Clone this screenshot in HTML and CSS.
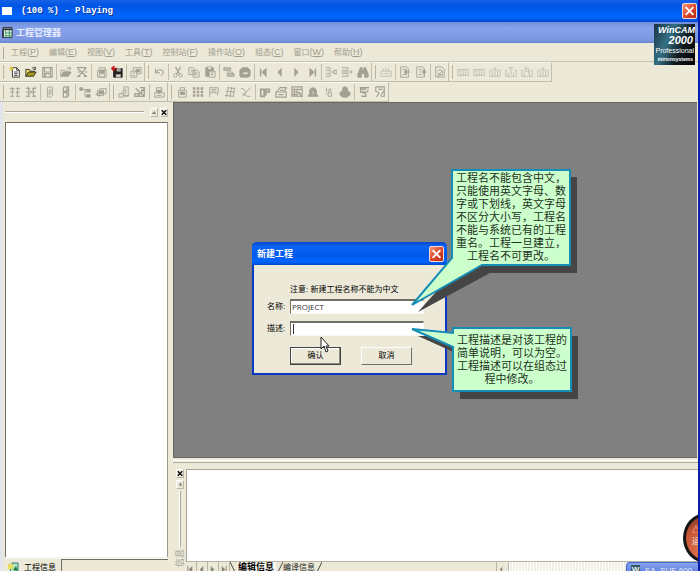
FILE: index.html
```html
<!DOCTYPE html>
<html lang="zh-CN">
<head>
<meta charset="utf-8">
<title>工程管理器</title>
<link rel="stylesheet" href="styles.css">
</head>
<body>
<svg class="symbols" aria-hidden="true">
  <symbol id="new" viewBox="0 0 14 14"><path d="M4 2h5l3 3v8H4z" fill="#fff" stroke="#222"/><path d="M9 2v3h3M6 7h4M6 9h4M6 11h4" stroke="#222"/><path d="M3 0v6M0 3h6M1 1l4 4M5 1L1 5" stroke="#d6c63a"/></symbol>
  <symbol id="open" viewBox="0 0 14 14"><path d="M1 12V4h4l1 2h5v2" fill="#f4e36c" stroke="#222"/><path d="M1 12l3-5h9l-3 5z" fill="#a89a1c" stroke="#222"/><path d="M8 3q2-3 4 0m0-2v3h-2" stroke="#222"/></symbol>
  <symbol id="open-off" viewBox="0 0 14 14"><path d="M1 12V5h4l1 1h4v2"/><path d="M1 12l3-5h9l-3 5z" class="fill"/><path d="M8 3q2-3 4 0m0-2v3h-2"/></symbol>
  <symbol id="save" viewBox="0 0 14 14"><path d="M2 2h11v11H2zM4 2v5h7V2M4 13V9h7v4M5 10v3" stroke-width="1.4"/></symbol>
  <symbol id="close" viewBox="0 0 14 14"><path d="M1 2h11M1 12h4m4 0h4M3 12L12 2M2 3l10 9M2 7h3m5 0h3" stroke-width="1.4"/></symbol>
  <symbol id="saveas" viewBox="0 0 14 14"><path d="M3 5h10v8H3zM5 9h6v4H5z"/><path d="M5 5h6v3H5z" class="fill"/><path d="M5 4V2h7v3"/></symbol>
  <symbol id="export" viewBox="0 0 14 14"><path d="M4 3h9v10H3V5z" fill="#222" stroke="#222"/><path d="M6 10h5v3H6z" fill="#ddd"/><path d="M7 3h4v3H7z" fill="#aaa"/><path d="M7 3H1m3-3L1 3l3 3" stroke="#c5161d" stroke-width="1.8"/></symbol>
  <symbol id="props" viewBox="0 0 14 14"><path d="M4 2h9v7H8M4 5V2M1 6h7v7H1zM3 8h3m-3 3h3"/><path d="M7 4h4v3H7z" class="fill"/></symbol>
  <symbol id="undo" viewBox="0 0 14 14"><path d="M3 3v5h5M3 8c2-5 9-5 9 0q0 2-3 3" stroke-width="1.2"/></symbol>
  <symbol id="cut" viewBox="0 0 14 14"><path d="M4 1l5 9M10 1L5 10" stroke-width="1.4"/><circle cx="4" cy="11" r="2"/><circle cx="10" cy="11" r="2"/></symbol>
  <symbol id="copy" viewBox="0 0 14 14"><path d="M1 2h5l2 2v6H1zM6 5h5l2 2v6H6zM3 5h3m-3 2h3m2 1h3m-3 2h3"/></symbol>
  <symbol id="paste" viewBox="0 0 14 14"><path d="M2 2h9v10H2z" class="fill"/><path d="M4 1h5v3H4z" fill="#ece9d8"/><path d="M6 6h7v7H6zM8 8h3m-3 2h3" fill="#ece9d8"/></symbol>
  <symbol id="cascade" viewBox="0 0 14 14"><path d="M1 2h8v3H1zM5 9h8v3H5z" class="fill light"/><path d="M4 7h7v2"/></symbol>
  <symbol id="tray" viewBox="0 0 14 14"><path d="M1 5l3-3h6l3 3v6l-2 2H2l-1-2z" class="fill"/><path d="M5 7h6l-1 3H4z" fill="#ece9d8"/></symbol>
  <symbol id="first" viewBox="0 0 14 14"><path d="M3 3v9" stroke-width="1.8"/><path d="M10 2v11L4 7z" class="fill flat"/></symbol>
  <symbol id="prev" viewBox="0 0 14 14"><path d="M9 2v11L4 7z" class="fill flat"/></symbol>
  <symbol id="next" viewBox="0 0 14 14"><path d="M5 2v11l5-6z" class="fill flat"/></symbol>
  <symbol id="last" viewBox="0 0 14 14"><path d="M11 3v9" stroke-width="1.8"/><path d="M4 2v11l6-6z" class="fill flat"/></symbol>
  <symbol id="insert" viewBox="0 0 14 14"><path d="M1 2h5v3H1M1 12h5V9H1M5 7h4M10 5h4M10 5v4h4M13 5v4"/></symbol>
  <symbol id="remove" viewBox="0 0 14 14"><path d="M1 2h7v3H1M1 12h7V9H1M1 7h12m-2-2l2 2-2 2"/></symbol>
  <symbol id="find" viewBox="0 0 14 14"><path d="M4 2h2v3h2V2h2l3 7v4H9V9H5v4H1V9z" class="fill"/></symbol>
  <symbol id="ruler" viewBox="0 0 14 14"><path d="M1 6h12v6H1zM4 6V3m3 3V2m3 4V3M3 9h8" class="pale"/></symbol>
  <symbol id="pagein" viewBox="0 0 14 14"><path d="M2 1h7l2 2v10H2zM4 4h4M4 10h4"/><path d="M13 7H7m2-3L6 7l3 3z" class="fill"/></symbol>
  <symbol id="pageout" viewBox="0 0 14 14"><path d="M2 1h7l2 2v10H2zM4 4h4M4 10h4"/><path d="M5 7h6m-1-3l3 3-3 3z" class="fill"/></symbol>
  <symbol id="pagecheck" viewBox="0 0 14 14"><path d="M2 1h7l3 3v9H2zM4 6l3-2 3 2v4l-6 2 5-6M4 8l6 3"/></symbol>
  <symbol id="module" viewBox="0 0 14 14"><path d="M1 4h12v7H1zM4 4v7m3-7v7m3-7v7" class="pale"/></symbol>
  <symbol id="modup" viewBox="0 0 14 14"><path d="M3 5H1v7h12V5h-2M4 12V6l3-4 3 4v6M7 2v10" class="pale"/></symbol>
  <symbol id="modtop" viewBox="0 0 14 14"><path d="M3 5H1v7h12V5h-2M4 12V8m6 4V8M4 2h6M7 2v8" class="pale"/></symbol>
  <symbol id="modturn" viewBox="0 0 14 14"><path d="M3 5H1v7h12V5h-2M4 12V8m6 4V8M5 1v5h5M5 3h4v6" class="pale"/></symbol>
  <symbol id="grid" viewBox="0 0 14 14"><path d="M1 3h5m2 0h5M1 7h5m2 0h5M1 12h5m2 0h5M4 1v12M10 1v12M6 3L4 5m6 2l-2 2" /></symbol>
  <symbol id="gridx" viewBox="0 0 14 14"><path d="M1 3h5m2 0h5M1 7h12M1 12h5m2 0h5M4 1v12M10 1v12M2 1l11 12M13 1L2 13"/></symbol>
  <symbol id="clip" viewBox="0 0 14 14"><path d="M4 3q0-2 2-2h2q2 0 2 2v8l-2 2H4zM6 4v7m2-8v7" /></symbol>
  <symbol id="clipx" viewBox="0 0 14 14"><path d="M4 3q0-2 2-2h4v10l-2 2H4zM3 4l6 6m1-6l-6 4m4-6v9" stroke-width="1.4"/></symbol>
  <symbol id="tree" viewBox="0 0 14 14"><path d="M1 2h3v3H1zM9 4h4v3H9zM9 10h4v3H9z" class="fill"/><path d="M4 4h5M7 4v8h2"/></symbol>
  <symbol id="stack" viewBox="0 0 14 14"><path d="M5 3h8v6H8M3 5h7v6H3zM1 10l4-3v5z"/><path d="M5 6h5v3H5z" class="fill"/></symbol>
  <symbol id="tower" viewBox="0 0 14 14"><path d="M7 1h5v11H7zM1 9h5v4H1zM3 9l4-4M9 3v6M6 11h7"/></symbol>
  <symbol id="towerx" viewBox="0 0 14 14"><path d="M7 2h5v10H7M1 9h5v3H1zM3 13L13 2M2 3l10 9M9 4v6" stroke-width="1.5"/></symbol>
  <symbol id="download" viewBox="0 0 14 14"><path d="M2 8h11v5H2zM4 2h6v5H4z"/><path d="M4 5h6L7 9zM4 11h6" class="fill"/></symbol>
  <symbol id="lock" viewBox="0 0 14 14"><path d="M3 5h9v8H3zM5 5V2h5v3"/><path d="M5 7h5v3H5z" class="fill"/></symbol>
  <symbol id="dots" viewBox="0 0 14 14"><path d="M1 3h12M1 7h12M1 11h12" stroke-width="3" stroke-dasharray="3 1.5"/></symbol>
  <symbol id="flag" viewBox="0 0 14 14"><path d="M2 1v12M2 2h10v6H2M4 4h6M4 6h5m2 3v2"/></symbol>
  <symbol id="mesh" viewBox="0 0 14 14"><path d="M4 2l9 1M2 6l10 1M1 11l10 1M5 1L3 13M9 1L7 13M12 2l-1 11"/></symbol>
  <symbol id="curve" viewBox="0 0 14 14"><path d="M1 3q6 0 5 5t6 4M12 2L3 12M2 8l3 3"/></symbol>
  <symbol id="pipes" viewBox="0 0 14 14"><path d="M2 12V4h4v8zM8 11V4h4v3H9" stroke-width="2"/></symbol>
  <symbol id="printer" viewBox="0 0 14 14"><path d="M1 7h12v6H1zM2 7l4-5h7l-2 5M4 10h6M6 5h4" stroke-width="1.4"/></symbol>
  <symbol id="table" viewBox="0 0 14 14"><path d="M1 1h12v11H1zM1 4h12M4 4v8M7 4v8M1 7h8M1 10h7" stroke-width="1.3"/><path d="M9 7l4 6" stroke-width="2"/></symbol>
  <symbol id="bell" viewBox="0 0 14 14"><path d="M1 12l2-3V5q1-3 4-3t4 3v4l2 3z" class="fill"/><path d="M6 6l2 2-2 2" stroke="#ece9d8"/></symbol>
  <symbol id="link" viewBox="0 0 14 14"><path d="M4 2v4h3V3M6 8h4v4H6zM3 8l2 2m4-7v4"/></symbol>
  <symbol id="club" viewBox="0 0 14 14"><circle cx="7" cy="4" r="3" class="fill"/><circle cx="4" cy="9" r="3" class="fill"/><circle cx="10" cy="9" r="3" class="fill"/><path d="M4 13h6L7 8z" class="fill"/></symbol>
  <symbol id="script" viewBox="0 0 14 14"><path d="M2 2h11M3 2v5h6M4 4h5M5 8h4v4H4m6-5l2-2" stroke-width="1.6"/></symbol>
  <symbol id="note" viewBox="0 0 14 14"><path d="M2 1h10v11H8M2 1v5l4 2-3 5M5 4h5M8 11l4-6" stroke-width="1.3"/></symbol>
</svg>

<header class="title-bar">
  <span class="player-icon"></span>
  <span class="player-title">(100 %) - Playing</span>
  <button class="close-btn" aria-label="关闭"><svg viewBox="0 0 10 10"><path d="M2 2l6 6M8 2L2 8"/></svg></button>
</header>

<div class="app">
  <div class="app-title">
    <svg class="app-icon" viewBox="0 0 12 13"><path d="M1 1h10v11H1z" fill="#e4efe4" stroke="#26343c"/><path d="M1 3h10" stroke="#26343c" stroke-width="2"/><path d="M4 4v8M4 7h7M4 10h7M8 4v8" stroke="#39915a"/><path d="M1 4v8" stroke="#26343c" stroke-width="2"/></svg>
    <h1>工程管理器</h1>
  </div>

  <nav class="menu-bar">
    <a href="#">工程<span>(<u>P</u>)</span></a>
    <a href="#">编辑<span>(<u>E</u>)</span></a>
    <a href="#">视图<span>(<u>V</u>)</span></a>
    <a href="#">工具<span>(<u>T</u>)</span></a>
    <a href="#">控制站<span>(<u>F</u>)</span></a>
    <a href="#">操作站<span>(<u>O</u>)</span></a>
    <a href="#">组态<span>(<u>C</u>)</span></a>
    <a href="#">窗口<span>(<u>W</u>)</span></a>
    <a href="#">帮助<span>(<u>H</u>)</span></a>
  </nav>

  <div class="toolbar">
    <div class="group">
      <button aria-label="新建"><svg><use href="#new"/></svg></button>
      <button aria-label="打开"><svg><use href="#open"/></svg></button>
      <button aria-label="保存"><svg><use href="#save"/></svg></button>
      <i></i>
      <button aria-label="载入"><svg><use href="#open-off"/></svg></button>
      <button aria-label="关闭工程"><svg><use href="#close"/></svg></button>
      <i></i>
      <button aria-label="另存"><svg><use href="#saveas"/></svg></button>
      <button aria-label="导出"><svg><use href="#export"/></svg></button>
      <i></i>
      <button aria-label="属性"><svg><use href="#props"/></svg></button>
    </div>
    <div class="group">
      <button aria-label="撤消"><svg><use href="#undo"/></svg></button>
      <i></i>
      <button aria-label="剪切"><svg><use href="#cut"/></svg></button>
      <button aria-label="复制"><svg><use href="#copy"/></svg></button>
      <button aria-label="粘贴"><svg><use href="#paste"/></svg></button>
      <i></i>
      <button aria-label="层叠"><svg><use href="#cascade"/></svg></button>
      <button aria-label="收集"><svg><use href="#tray"/></svg></button>
      <i></i>
      <button aria-label="首项"><svg><use href="#first"/></svg></button>
      <button aria-label="上一项"><svg><use href="#prev"/></svg></button>
      <button aria-label="下一项"><svg><use href="#next"/></svg></button>
      <button aria-label="末项"><svg><use href="#last"/></svg></button>
      <i></i>
      <button aria-label="插入"><svg><use href="#insert"/></svg></button>
      <button aria-label="删除"><svg><use href="#remove"/></svg></button>
      <button aria-label="查找"><svg><use href="#find"/></svg></button>
    </div>
    <div class="group">
      <button aria-label="标尺"><svg><use href="#ruler"/></svg></button>
      <i></i>
      <button aria-label="导入页"><svg><use href="#pagein"/></svg></button>
      <button aria-label="导出页"><svg><use href="#pageout"/></svg></button>
      <i></i>
      <button aria-label="检查"><svg><use href="#pagecheck"/></svg></button>
    </div>
    <div class="group">
      <button aria-label="模块一"><svg><use href="#module"/></svg></button>
      <button aria-label="模块二"><svg><use href="#module"/></svg></button>
      <button aria-label="模块三"><svg><use href="#modup"/></svg></button>
      <button aria-label="模块四"><svg><use href="#modtop"/></svg></button>
      <button aria-label="模块五"><svg><use href="#modturn"/></svg></button>
      <button aria-label="模块六"><svg><use href="#modup"/></svg></button>
    </div>
  </div>

  <div class="toolbar">
    <div class="group">
      <button aria-label="网格"><svg><use href="#grid"/></svg></button>
      <button aria-label="清除网格"><svg><use href="#gridx"/></svg></button>
      <i></i>
      <button aria-label="附件"><svg><use href="#clip"/></svg></button>
      <button aria-label="移除附件"><svg><use href="#clipx"/></svg></button>
      <i></i>
      <button aria-label="结构"><svg><use href="#tree"/></svg></button>
      <button aria-label="堆叠"><svg><use href="#stack"/></svg></button>
    </div>
    <div class="group">
      <button aria-label="站点"><svg><use href="#tower"/></svg></button>
      <button aria-label="移除站点"><svg><use href="#towerx"/></svg></button>
      <i></i>
      <button aria-label="下载"><svg><use href="#download"/></svg></button>
    </div>
    <div class="group">
      <button aria-label="权限"><svg><use href="#lock"/></svg></button>
      <button aria-label="总貌"><svg><use href="#dots"/></svg></button>
      <button aria-label="标记"><svg><use href="#flag"/></svg></button>
      <button aria-label="分组"><svg><use href="#mesh"/></svg></button>
      <button aria-label="趋势"><svg><use href="#curve"/></svg></button>
      <i></i>
      <button aria-label="流程"><svg><use href="#pipes"/></svg></button>
      <button aria-label="打印"><svg><use href="#printer"/></svg></button>
      <button aria-label="报表"><svg><use href="#table"/></svg></button>
      <button aria-label="报警"><svg><use href="#bell"/></svg></button>
      <button aria-label="连接"><svg><use href="#link"/></svg></button>
      <button aria-label="用户"><svg><use href="#club"/></svg></button>
      <i></i>
      <button aria-label="脚本"><svg><use href="#script"/></svg></button>
      <button aria-label="注释"><svg><use href="#note"/></svg></button>
    </div>
  </div>

  <div class="main">
    <aside class="project-pane">
      <div class="pane-head">
        <span class="rule"></span>
        <button class="mini" aria-label="折叠"><svg viewBox="0 0 8 8"><path d="M1 6h6L4 2z" fill="#8a887c"/></svg></button>
        <button class="mini" aria-label="关闭"><svg viewBox="0 0 8 8"><path d="M1 1l6 6M7 1L1 7" stroke="#111" stroke-width="2"/></svg></button>
      </div>
      <div class="tree-view"></div>
      <div class="pane-tabs">
        <a class="pane-tab" href="#"><svg viewBox="0 0 11 11"><path d="M4 1h6v9H2z" fill="#b7e4c4" stroke="#2b7f80"/><path d="M0 2h5v5H0z" fill="#e8dd59"/><path d="M5 8l3-4 2 5z" fill="#277c45"/></svg>工程信息</a>
        <span class="tab-rest"></span>
      </div>
    </aside>

    <div class="right-column">
      <main class="workspace">
        <section class="dialog" role="dialog" aria-labelledby="dialog-title">
          <header>
            <h2 id="dialog-title">新建工程</h2>
            <button class="close-btn" aria-label="关闭"><svg viewBox="0 0 10 10"><path d="M2 2l6 6M8 2L2 8"/></svg></button>
          </header>
          <form>
            <p class="note">注意: 新建工程名称不能为中文</p>
            <label for="name">名称:</label>
            <input id="name" type="text" value="PROJECT">
            <label for="desc">描述:</label>
            <div class="caret-field"><input id="desc" type="text"></div>
            <div class="actions">
              <button class="default" type="button">确认</button>
              <button type="button">取消</button>
            </div>
          </form>
        </section>
        <svg class="balloons" viewBox="0 0 180 240" aria-hidden="true">
          <g fill="#454545"><path d="M50 8H167V104H80L8 143L50 96z"/><path d="M50 167H168V230H50V186L8 167z"/></g>
          <g fill="#ccffcc" stroke="#168db5" stroke-width="2"><path d="M42 1H160V96H72L2 136L42 89z"/><path d="M43 159H161V222H43V178L2 160L43 164z"/></g>
        </svg>
        <p class="tip tip-name">工程名不能包含中文，只能使用英文字母、数字或下划线，英文字母不区分大小写，工程名不能与系统已有的工程重名。工程一旦建立，工程名不可更改。</p>
        <p class="tip tip-desc">工程描述是对该工程的简单说明，可以为空。工程描述可以在组态过程中修改。</p>
        <svg class="pointer" viewBox="0 0 10 17" aria-hidden="true"><path d="M1 1v12l3-3 2 6 2-1-2-5h3z" fill="#fff" stroke="#222"/></svg>
      </main>

      <section class="output">
        <div class="output-side">
          <button class="mini" aria-label="关闭"><svg viewBox="0 0 8 8"><path d="M1 1l6 6M7 1L1 7" stroke="#111" stroke-width="2"/></svg></button>
          <button class="mini" aria-label="折叠"><svg viewBox="0 0 8 8"><path d="M6 1v6L2 4z" fill="#8a887c"/></svg></button>
          <span class="rule-v"></span>
          <span class="side-title">信息</span>
        </div>
        <div class="output-body">
          <div class="output-text"></div>
          <div class="sheet-bar">
            <button aria-label="首页"><svg viewBox="0 0 10 10"><path d="M2 1v8" stroke="#8a887c"/><path d="M7 1v8L3 5z" fill="#8a887c"/></svg></button>
            <button aria-label="上页"><svg viewBox="0 0 10 10"><path d="M7 1v8L3 5z" fill="#8a887c"/></svg></button>
            <button aria-label="下页"><svg viewBox="0 0 10 10"><path d="M3 1v8l4-4z" fill="#8a887c"/></svg></button>
            <button aria-label="末页"><svg viewBox="0 0 10 10"><path d="M8 1v8" stroke="#8a887c"/><path d="M3 1v8l4-4z" fill="#8a887c"/></svg></button>
            <svg class="slant" viewBox="0 0 7 12"><path d="M0 0l6 12"/></svg>
            <a class="sheet active" href="#">编辑信息</a>
            <svg class="slant" viewBox="0 0 7 12"><path d="M7 0L1 12"/></svg>
            <a class="sheet" href="#">编译信息</a>
            <svg class="slant" viewBox="0 0 7 12"><path d="M7 0L1 12"/></svg>
            <span class="sheet-fill"></span>
            <button class="scroll-left" aria-label="向左"><svg viewBox="0 0 10 10"><path d="M6 2v6L3 5z" fill="#8a887c"/></svg></button>
            <span class="scroll-track"></span>
          </div>
        </div>
      </section>
    </div>
  </div>
</div>

<div class="wincam"><b>WinCAM</b><strong>2000</strong><span>Professional</span><small>mirionsystems</small></div>
<div class="orb"><span>△<br>运行</span></div>
<div class="task-tip"><b>W</b><span>EA_SUE 600</span></div>
</body>
</html>
```
FILE: styles.css
```css
:root {
  --face: #ece9d8;
  --shade: #aca899;
  --dark: #716f64;
  --glyph: #a3a093;
}

* { box-sizing: border-box; }

body {
  margin: 0;
  height: 100vh;
  overflow: hidden;
  position: relative;
  display: flex;
  flex-direction: column;
  background: var(--face);
  border-right: 2px solid #0a1fa8;
  font: 8px/12px "Liberation Sans", "Noto Sans CJK SC", sans-serif;
  color: #222;
}

h1, h2, p { margin: 0; }
a { color: inherit; text-decoration: none; }
button { margin: 0; padding: 0; border: 0; background: none; font: inherit; color: inherit; }
svg { display: block; fill: none; }
.symbols { position: absolute; width: 0; height: 0; }

/* Title bars */
.title-bar {
  flex: none;
  height: 22px;
  display: flex;
  align-items: center;
  padding: 0 1px 0 2px;
  background: linear-gradient(#1763e8, #0055e5 25%, #0066ff 80%, #0046c8);
  color: #fff;
}
.player-icon { width: 10px; height: 8px; background: #fff; }
.player-title {
  flex: 1;
  margin-left: 9px;
  font: bold 9px/12px "Liberation Mono", monospace;
  text-shadow: 1px 1px #123c9c;
}
.close-btn {
  width: 15px;
  height: 16px;
  border: 1px solid #f5d9d0;
  border-radius: 2px;
  background: linear-gradient(135deg, #f09a7c, #e0492a 50%, #b8290c);
}
.close-btn svg { width: 100%; height: 100%; stroke: #fff; stroke-width: 1.5; }

.app {
  flex: 1;
  min-height: 0;
  display: flex;
  flex-direction: column;
}
.app-title {
  flex: none;
  height: 21px;
  display: flex;
  align-items: center;
  padding: 0 2px;
  background: linear-gradient(#6f8ddd, #88a2ea 30%, #7b97e0 85%, #6a85cf);
  color: #e6edff;
}
.app-icon { width: 11px; height: 13px; }
.app-title h1 {
  margin-left: 3px;
  font: bold 9px/12px "Noto Sans CJK SC", sans-serif;
}

/* Menu and toolbars */
.menu-bar {
  flex: none;
  height: 19px;
  display: flex;
  align-items: center;
  gap: 10px;
  padding-left: 11px;
  border-bottom: 1px solid #c8c4b2;
  color: #a09c8e;
  background: linear-gradient(var(--shade), var(--shade)) 3px 4px / 1px 12px no-repeat;
}
.menu-bar span { font-size: 9px; }

.toolbar {
  flex: none;
  height: 20px;
  display: flex;
}
.group {
  display: flex;
  align-items: center;
  padding-left: 7px;
  border-right: 1px solid #c2beae;
  border-bottom: 1px solid #c2beae;
  border-top: 1px solid #f8f7f0;
  background: linear-gradient(#b8b4a4, #b8b4a4) 3px 2px / 1px 14px no-repeat;
}
.group + .group { padding-left: 6px; }
.group button { width: 16px; height: 18px; display: grid; place-items: center; }
.group svg { width: 12px; height: 12px; stroke: var(--glyph); overflow: visible; }
.group i {
  width: 3px;
  height: 16px;
  background: linear-gradient(#c2beae, #c2beae) 1px 0 / 1px 100% no-repeat;
}
.fill { fill: var(--glyph); }
.light { fill: #c2bfb1; }
.flat { stroke: none; }
.pale { stroke: #bfbcae; }

/* Panels */
.main {
  flex: 1;
  min-height: 0;
  display: flex;
  border-left: 3px solid #e3e5ec;
}
.project-pane {
  flex: none;
  width: 170px;
  display: flex;
  flex-direction: column;
  padding: 0 5px 0 2px;
}
.pane-head {
  height: 20px;
  display: flex;
  align-items: center;
  gap: 2px;
}
.rule { flex: 1; margin-right: 4px; border-top: 1px solid var(--shade); border-bottom: 1px solid #fff; }
.mini {
  flex: none;
  width: 8px;
  height: 9px;
  border: 1px solid;
  border-color: #fff #bab6a7 #bab6a7 #fff;
}
.mini svg { width: 6px; height: 7px; overflow: visible; }
.tree-view {
  flex: 1;
  background: #fff;
  border: 1px solid var(--dark);
  border-right-color: #9b988a;
  border-bottom: 0;
}
.pane-tabs { height: 14px; padding-top: 2px; display: flex; background: #f7f5ea; }
.pane-tab {
  height: 17px;
  padding-left: 3px;
  display: flex;
  align-items: center;
  gap: 5px;
  width: 56px;
  background: var(--face);
  white-space: nowrap;
  color: #000;
}
.pane-tab svg { width: 11px; height: 11px; }
.tab-rest { flex: 1; border: 1px solid var(--dark); border-width: 1px 0 0 1px; background: var(--face); }

.right-column {
  flex: 1;
  min-width: 0;
  display: flex;
  flex-direction: column;
}
.workspace {
  flex: 1;
  position: relative;
  margin-right: 1px;
  background: #808080;
  border: 1px solid #68665e;
  border-right: 0;
}
.output {
  flex: none;
  height: 113px;
  display: flex;
  padding-top: 11px;
  background: linear-gradient(#fff, #fff) 0 2px / 100% 1px no-repeat, linear-gradient(#b3af9f, #b3af9f) 0 4px / 100% 1px no-repeat;
}
.output-side {
  flex: none;
  width: 13px;
  display: flex;
  flex-direction: column;
  align-items: center;
  gap: 2px;
}
.rule-v { flex: none; height: 56px; border-left: 1px solid #fff; border-right: 1px solid var(--shade); }
.side-title { flex: none; writing-mode: sideways-lr; white-space: nowrap; font-size: 9px; color: #aaa698; }
.output-body { flex: 1; min-width: 0; display: flex; flex-direction: column; }
.output-text { flex: 1; background: #fff; border-top: 1px solid var(--shade); border-left: 1px solid var(--shade); }
.sheet-bar {
  flex: none;
  height: 10px;
  display: flex;
  overflow: hidden;
  border-top: 1px solid #b8b4a4;
}
.sheet-bar button { flex: none; width: 11px; height: 14px; border-right: 1px solid #bab6a7; }
.sheet-bar svg { width: 9px; height: 9px; }
.sheet-bar .slant { flex: none; width: 7px; height: 12px; stroke: #444; }
.sheet {
  flex: none;
  white-space: nowrap;
  line-height: 11px;
}
.sheet.active { font-weight: bold; font-size: 9px; background: #f8f7f0; color: #000; padding: 0 2px 0 1px; }
.sheet-fill { flex: 1; }
.sheet-bar .scroll-left { width: 13px; border-left: 1px solid #bab6a7; }
.scroll-track { flex: none; width: 37%; background: repeating-linear-gradient(90deg, #fff 0 1px, #f1efe5 1px 3px); }

/* New project dialog */
.dialog {
  position: absolute;
  left: 78px;
  top: 139px;
  width: 195px;
  border: 2px solid #0a37c4;
  border-top: 0;
  border-radius: 5px 5px 0 0;
  background: var(--face);
}
.dialog header {
  height: 23px;
  margin: 0 -2px;
  display: flex;
  align-items: center;
  justify-content: space-between;
  padding: 0 3px 0 5px;
  border-radius: 5px 5px 0 0;
  background: linear-gradient(#0a45cc, #0a63f2 20%, #0058ea 60%, #0066ff 85%, #0048cc);
  color: #fff;
}
.dialog h2 { font: bold 9px/12px "Noto Sans CJK SC", sans-serif; }
.dialog form {
  display: grid;
  grid-template-columns: 22px 134px;
  column-gap: 1px;
  align-items: center;
  padding: 19px 12px 8px 13px;
}
.note { grid-column: 2; margin-bottom: 3px; color: #000; white-space: nowrap; }
.dialog label { color: #000; }
.dialog input {
  display: block;
  width: 100%;
  height: 15px;
  padding: 0 1px 2px;
  border: 1px solid;
  border-color: var(--dark) #f8f7f0 #f8f7f0 var(--dark);
  border-top-width: 2px;
  background: #fff;
  font: 8px/10px "Open Sans", sans-serif;
  color: #333;
}
.caret-field { margin: 7px 0; background: #fff; position: relative; }
.caret-field::after { content: ""; position: absolute; left: 3px; top: 3px; width: 1px; height: 10px; background: #333; }
.actions { grid-column: 2; display: flex; gap: 20px; margin-top: 4px; }
.actions button {
  width: 51px;
  height: 18px;
  border: 1px solid;
  border-color: #fff var(--dark) var(--dark) #fff;
  color: #000;
}
.actions .default { border-color: #444; box-shadow: inset -1px -1px #8d8a7d, inset 1px 1px #fff; }

/* Balloons over the dialog */
.balloons { position: absolute; left: 236px; top: 66px; width: 180px; height: 240px; }
.tip {
  position: absolute;
  width: 112px;
  font: 11px/13px "Noto Sans CJK SC", sans-serif;
  text-align: center;
  color: #223022;
}
.tip-name { left: 281px; top: 68px; }
.tip-desc { left: 282px; top: 230px; }
.pointer { position: absolute; left: 146px; top: 233px; width: 10px; height: 17px; }

/* Overlays at the window edge */
.wincam {
  position: absolute;
  right: 3px;
  top: 24px;
  width: 41px;
  height: 41px;
  padding-top: 2px;
  display: flex;
  flex-direction: column;
  align-items: flex-end;
  overflow: hidden;
  background: linear-gradient(115deg, #19323f, #347084 35%, #101a20 65%, #000);
  color: #fff;
}
.wincam b { font: italic bold 9px/9px "Liberation Sans", sans-serif; }
.wincam strong { font: italic bold 11px/11px "Liberation Sans", sans-serif; padding-right: 2px; }
.wincam span { font: 7px/9px "Liberation Sans", sans-serif; padding-right: 1px; }
.wincam small { font: bold 5px/8px "Liberation Sans", sans-serif; padding-right: 2px; }
.orb {
  position: absolute;
  right: -31px;
  bottom: 8px;
  width: 46px;
  height: 50px;
  border: 3px solid #151515;
  border-radius: 50%;
  padding: 8px 0 0 6px;
  background: radial-gradient(circle at 45% 75%, #e27a50, #c65435 55%, #5a2a22);
  color: #f4e4dc;
  line-height: 12px;
}
.task-tip {
  position: absolute;
  right: -2px;
  bottom: 0;
  width: 74px;
  height: 9px;
  padding: 2px 0 0 4px;
  display: flex;
  gap: 5px;
  overflow: hidden;
  border: 1px solid #4166d0;
  border-width: 1px 0 0 1px;
  border-radius: 4px 0 0;
  background: linear-gradient(#89a3ee, #6484e0);
  color: #eef2ff;
  white-space: nowrap;
}
.task-tip b { width: 9px; height: 10px; background: #2f5d62; line-height: 9px; text-align: center; }
```
